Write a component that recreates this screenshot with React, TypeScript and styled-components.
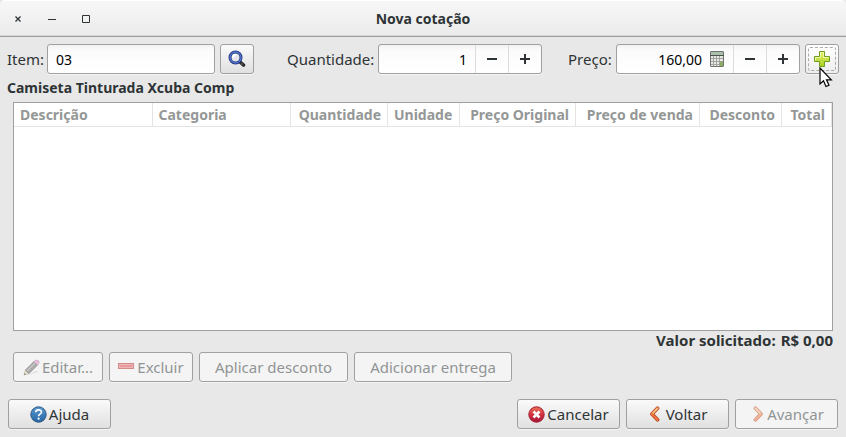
import React from "react";
import styled, { createGlobalStyle, css } from "styled-components";

const GlobalStyle = createGlobalStyle`
  * { box-sizing: border-box; }
  body { margin: 0; background: #e8e8e8; }
  body, button, input, table {
    font-family: "Noto Sans", sans-serif;
    font-size: 14px;
    line-height: 20px;
    color: #2e3436;
  }
`;

const Window = styled.main`
  display: flex;
  flex-direction: column;
  min-height: 100vh;
  background: #e8e8e8;
`;

const TitleBar = styled.header`
  display: grid;
  grid-template-columns: 1fr auto 1fr;
  align-items: center;
  height: 37px;
  background: linear-gradient(#f7f7f7, #ebebeb);
  border-top: 1px solid #ffffff;
  border-bottom: 1px solid #9c9c9c;
  border-radius: 5px 5px 0 0;
  box-shadow: inset 0 -1px #d6d6d6;
`;

const WindowControls = styled.div`
  display: flex;
  padding-left: 1px;
`;

const WindowButton = styled.button`
  display: flex;
  align-items: center;
  justify-content: center;
  width: 34px;
  height: 30px;
  padding: 0;
  border: 0;
  background: none;
`;

const Title = styled.h1`
  margin: 0;
  font-size: 14px;
  font-weight: 700;
`;

const FieldRow = styled.div`
  display: flex;
  padding: 7px 7px 0;
`;

const Field = styled.div`
  display: flex;
  align-items: center;
`;

const ItemField = styled(Field)`
  flex: 1;
  min-width: 0;
  margin-right: 33px;
`;

const PriceField = styled(Field)`
  margin-left: 26px;
`;

const FieldLabel = styled.label<{ $width: number }>`
  flex: none;
  width: ${(p) => p.$width}px;
  font-size: 15px;
  white-space: nowrap;
`;

const fieldFrame = css`
  height: 30px;
  border: 1px solid #a0a0a0;
  border-radius: 3px;
  background: linear-gradient(#f2f2f2, #fbfbfb 5px, #ffffff);
  box-shadow: 0 1px #f5f5f5;
`;

const TextInput = styled.input`
  ${fieldFrame}
  flex: 1;
  min-width: 0;
  padding: 0 8px;
  color: #000;
  outline: none;
`;

const SpinBox = styled.div<{ $width: number }>`
  ${fieldFrame}
  display: flex;
  align-items: center;
  width: ${(p) => p.$width}px;
`;

const SpinInput = styled.input`
  flex: 1;
  min-width: 0;
  height: 28px;
  padding: 0 8px;
  border: 0;
  background: none;
  color: #000;
  text-align: right;
  outline: none;
`;

const SpinButton = styled.button`
  display: flex;
  align-items: center;
  justify-content: center;
  flex: none;
  width: 33px;
  height: 28px;
  padding: 0;
  border: 0;
  border-left: 1px solid #dcdcdc;
  background: none;
`;

const AdornmentButton = styled.button`
  display: flex;
  flex: none;
  margin-right: 9px;
  padding: 0;
  border: 0;
  background: none;
`;

const Button = styled.button<{ $minWidth?: number; $pad?: number }>`
  display: flex;
  align-items: center;
  justify-content: center;
  gap: 2px;
  height: 30px;
  min-width: ${(p) => p.$minWidth ?? 34}px;
  padding: 0 ${(p) => p.$pad ?? 0}px;
  border: 1px solid #a0a0a0;
  border-radius: 3px;
  background: linear-gradient(#fafafa, #e0e0e0);
  box-shadow: 0 1px #f5f5f5;
  font-size: 15px;
  white-space: nowrap;

  &:disabled {
    background: #f4f4f4;
    color: #919494;
  }
  &:disabled svg { opacity: 0.5; }
`;

const SearchButton = styled(Button)`
  margin-left: 5px;
`;

const AddButton = styled(Button)`
  position: relative;
  margin-left: 5px;
  background: linear-gradient(#ffffff, #eeeeee);

  &::after {
    content: "";
    position: absolute;
    inset: 2px;
    border: 1px dashed #aaaaaa;
    border-radius: 2px;
  }
`;

const Pointer = styled.svg`
  position: absolute;
  z-index: 1;
  left: 13px;
  top: 22px;
`;

const ProductName = styled.h2`
  margin: 4px 7px 4px;
  font-size: 14px;
  font-weight: 700;
`;

const ListFrame = styled.section`
  flex: 1;
  margin: 0 13px;
  border: 1px solid #a0a0a0;
  background: #ffffff;
`;

const ItemTable = styled.table`
  width: 100%;
  table-layout: fixed;
  border-collapse: separate;
  border-spacing: 0;
`;

const HeaderCell = styled.th<{ $width?: number; $right?: boolean }>`
  width: ${(p) => (p.$width ? `${p.$width}px` : "auto")};
  height: 24px;
  padding: 0 6px;
  border-right: 1px solid #e4e4e4;
  border-bottom: 1px solid #e4e4e4;
  color: #949796;
  font-weight: 700;
  text-align: ${(p) => (p.$right ? "right" : "left")};
  white-space: nowrap;
`;

const Summary = styled.div`
  display: flex;
  justify-content: flex-end;
  gap: 5px;
  padding: 0 13px;
  height: 21px;
  font-size: 15px;
  line-height: 18px;
  font-weight: 700;
`;

const ItemActions = styled.div`
  display: flex;
  gap: 6px;
  padding: 0 13px;
`;

const Footer = styled.footer`
  display: flex;
  gap: 6px;
  padding: 17px 8px 8px;
`;

const Spacer = styled.div`
  flex: 1;
`;

const Minus = () => (
  <svg width="12" height="12" viewBox="0 0 12 12" aria-hidden="true">
    <path d="M1 6h10" stroke="#2e3436" strokeWidth="2" />
  </svg>
);

const Plus = () => (
  <svg width="12" height="12" viewBox="0 0 12 12" aria-hidden="true">
    <path d="M1 6h10M6 1v10" stroke="#2e3436" strokeWidth="2" />
  </svg>
);

const SearchIcon = () => (
  <svg width="18" height="18" viewBox="0 0 18 18" aria-hidden="true">
    <path d="M11.500 11.500l4 3.500" stroke="#2b2b2b" strokeWidth="3.600" strokeLinecap="round" />
    <path d="M13.500 13.500l1 1" stroke="#77736a" strokeWidth="1.200" />
    <circle cx="7.500" cy="7.500" r="5.500" fill="#e3e5ea" stroke="#26377f" strokeWidth="3" />
    <circle cx="7.500" cy="7.500" r="5.500" fill="none" stroke="#5275cd" strokeWidth="1.300" />
    <path d="M5 8c0-2 1-3 3-3" fill="none" stroke="#fff" strokeWidth="2" />
  </svg>
);

const CalculatorIcon = () => (
  <svg width="14" height="16" viewBox="0 0 14 16" aria-hidden="true">
    <rect x=".5" y=".5" width="13" height="15" rx=".5" fill="#e9eae7" stroke="#70736e" />
    <path d="M1 1h12v3H1z" fill="#a9c0ad" />
    <path d="M0 4.500h14" stroke="#4d504c" />
    <path d="M1 7.500h12M1 10.500h12M1 13.500h12M3.500 5v10M6.500 5v10M9.500 5v10" stroke="#a2a59f" />
    <path d="M10 11h3v4h-3z" fill="#8eac60" />
  </svg>
);

const AddIcon = () => (
  <svg width="18" height="18" viewBox="0 0 18 18" aria-hidden="true">
    <defs>
      <linearGradient id="add" x2="0" y2="1">
        <stop stopColor="#e4f36c" />
        <stop offset="1" stopColor="#a9cf20" />
      </linearGradient>
    </defs>
    <path d="M6.500 1.500h5v5h5v5h-5v5h-5v-5h-5v-5h5z" fill="url(#add)" stroke="#719c24" strokeLinejoin="round" />
    <path d="M7.500 7.500v-5h3v5h5M2.500 10.500v-3h5" fill="none" stroke="#eff8a4" />
  </svg>
);

const PencilIcon = () => (
  <svg width="17" height="17" viewBox="0 0 17 17" aria-hidden="true">
    <path d="M3 15c3 1 5 0 8-2s4 0 4 0c-4 0-6 4-12 2z" fill="#c4c4c4" />
    <path d="M1 16l1.500-5 3.500 3.500z" fill="#ead89c" stroke="#77705d" strokeWidth=".7" />
    <path d="M2.500 11L11 2.500l3.500 3.500L6 14.500z" fill="#6a6a6a" stroke="#222" strokeWidth=".8" />
    <path d="M4 12l8-8" stroke="#bbb" />
    <path d="M11 2.500q2.500-2.500 4.500-.8t-1 4.300z" fill="#e08cc4" stroke="#a56290" strokeWidth=".7" />
    <path d="M1 16l.5-2 1.500 1.500z" fill="#222" />
  </svg>
);

const RemoveIcon = () => (
  <svg width="17" height="16" viewBox="0 0 17 16" aria-hidden="true">
    <rect x=".5" y="4.500" width="15" height="5" fill="#e04545" stroke="#b82323" />
    <path d="M1.500 5.500h13v3h-13z" fill="none" stroke="#ea7c7c" />
  </svg>
);

const HelpIcon = () => (
  <svg width="17" height="17" viewBox="0 0 17 17" aria-hidden="true">
    <defs>
      <linearGradient id="help" x2="0" y2="1">
        <stop stopColor="#5d9bd1" />
        <stop offset="1" stopColor="#2465a4" />
      </linearGradient>
    </defs>
    <circle cx="8.500" cy="8.500" r="7.700" fill="url(#help)" stroke="#2b5783" />
    <path d="M5.700 6.300c.2-3.300 5.800-3.100 5.700-.1-.1 2-2.800 2-2.800 4" fill="none" stroke="#fff" strokeWidth="1.600" />
    <circle cx="8.600" cy="12.700" r="1.100" fill="#fff" />
  </svg>
);

const CancelIcon = () => (
  <svg width="17" height="17" viewBox="0 0 17 17" aria-hidden="true">
    <defs>
      <linearGradient id="cancel" x2="0" y2="1">
        <stop stopColor="#ee715b" />
        <stop offset=".5" stopColor="#d23440" />
        <stop offset="1" stopColor="#a71338" />
      </linearGradient>
    </defs>
    <circle cx="8.500" cy="8.500" r="7.700" fill="url(#cancel)" stroke="#a51a2d" />
    <path d="M5.500 5.500l6 6m0-6l-6 6" stroke="#fff" strokeWidth="2.600" />
  </svg>
);

const ChevronIcon = ({ forward }: { forward?: boolean }) => (
  <svg width="16" height="16" viewBox="0 0 16 16" aria-hidden="true">
    <g transform={forward ? "matrix(-1 0 0 1 16 0)" : undefined}>
      <path d="M9.500 2.300L4 8l5.500 5.700" fill="none" stroke="#bb4923" strokeWidth="3.800" strokeLinecap="round" strokeLinejoin="round" />
      <path d="M9.500 2.300L4 8" stroke="#f5b87c" strokeWidth="2" strokeLinecap="round" />
      <path d="M4 8l5.500 5.700" stroke="#f0743f" strokeWidth="2" strokeLinecap="round" />
    </g>
  </svg>
);

const columns = [
  { title: "Descrição" },
  { title: "Categoria" },
  { title: "Quantidade", width: 97, right: true },
  { title: "Unidade", width: 72 },
  { title: "Preço Original", width: 116, right: true },
  { title: "Preço de venda", width: 124, right: true },
  { title: "Desconto", width: 82, right: true },
  { title: "Total", width: 50, right: true },
];

export default function App() {
  return (
    <>
      <GlobalStyle />
      <Window>
        <TitleBar>
          <WindowControls>
            <WindowButton aria-label="Fechar">
              <svg width="8" height="8" viewBox="0 0 8 8">
                <path d="M1.500 1.500l5 5m0-5l-5 5" stroke="#2e3436" strokeWidth="1.300" />
              </svg>
            </WindowButton>
            <WindowButton aria-label="Minimizar">
              <svg width="8" height="8" viewBox="0 0 8 8">
                <path d="M0 4.500h8" stroke="#2e3436" />
              </svg>
            </WindowButton>
            <WindowButton aria-label="Maximizar">
              <svg width="8" height="8" viewBox="0 0 8 8">
                <path d="M.5.500h7v7h-7z" fill="none" stroke="#2e3436" />
              </svg>
            </WindowButton>
          </WindowControls>
          <Title>Nova cotação</Title>
        </TitleBar>

        <FieldRow>
          <ItemField>
            <FieldLabel htmlFor="item" $width={40}>Item:</FieldLabel>
            <TextInput id="item" defaultValue="03" />
            <SearchButton aria-label="Buscar item"><SearchIcon /></SearchButton>
          </ItemField>
          <Field>
            <FieldLabel htmlFor="quantity" $width={91}>Quantidade:</FieldLabel>
            <SpinBox $width={164}>
              <SpinInput id="quantity" defaultValue="1" />
              <SpinButton aria-label="Diminuir quantidade"><Minus /></SpinButton>
              <SpinButton aria-label="Aumentar quantidade"><Plus /></SpinButton>
            </SpinBox>
          </Field>
          <PriceField>
            <FieldLabel htmlFor="price" $width={48}>Preço:</FieldLabel>
            <SpinBox $width={184}>
              <SpinInput id="price" defaultValue="160,00" />
              <AdornmentButton aria-label="Calculadora"><CalculatorIcon /></AdornmentButton>
              <SpinButton aria-label="Diminuir preço"><Minus /></SpinButton>
              <SpinButton aria-label="Aumentar preço"><Plus /></SpinButton>
            </SpinBox>
            <AddButton aria-label="Adicionar item">
              <AddIcon />
              <Pointer width="14" height="22" viewBox="0 0 14 22" aria-hidden="true">
                <path d="M1 1v16l3.500-3.200 2.500 5.700 3-1.300-2.500-5.400h4.800z" fill="#fff" stroke="#000" strokeWidth="1.200" />
              </Pointer>
            </AddButton>
          </PriceField>
        </FieldRow>

        <ProductName>Camiseta Tinturada Xcuba Comp</ProductName>

        <ListFrame>
          <ItemTable>
            <thead>
              <tr>
                {columns.map((c) => (
                  <HeaderCell key={c.title} scope="col" $width={c.width} $right={c.right}>
                    {c.title}
                  </HeaderCell>
                ))}
              </tr>
            </thead>
          </ItemTable>
        </ListFrame>

        <Summary>
          <span>Valor solicitado:</span>
          <span>R$ 0,00</span>
        </Summary>

        <ItemActions>
          <Button disabled $minWidth={90} $pad={8}><PencilIcon />Editar...</Button>
          <Button disabled $minWidth={84} $pad={8}><RemoveIcon />Excluir</Button>
          <Button disabled $pad={15}>Aplicar desconto</Button>
          <Button disabled $pad={15}>Adicionar entrega</Button>
        </ItemActions>

        <Footer>
          <Button $minWidth={103}><HelpIcon />Ajuda</Button>
          <Spacer />
          <Button $minWidth={103}><CancelIcon />Cancelar</Button>
          <Button $minWidth={103}><ChevronIcon />Voltar</Button>
          <Button $minWidth={103} disabled><ChevronIcon forward />Avançar</Button>
        </Footer>
      </Window>
    </>
  );
}
